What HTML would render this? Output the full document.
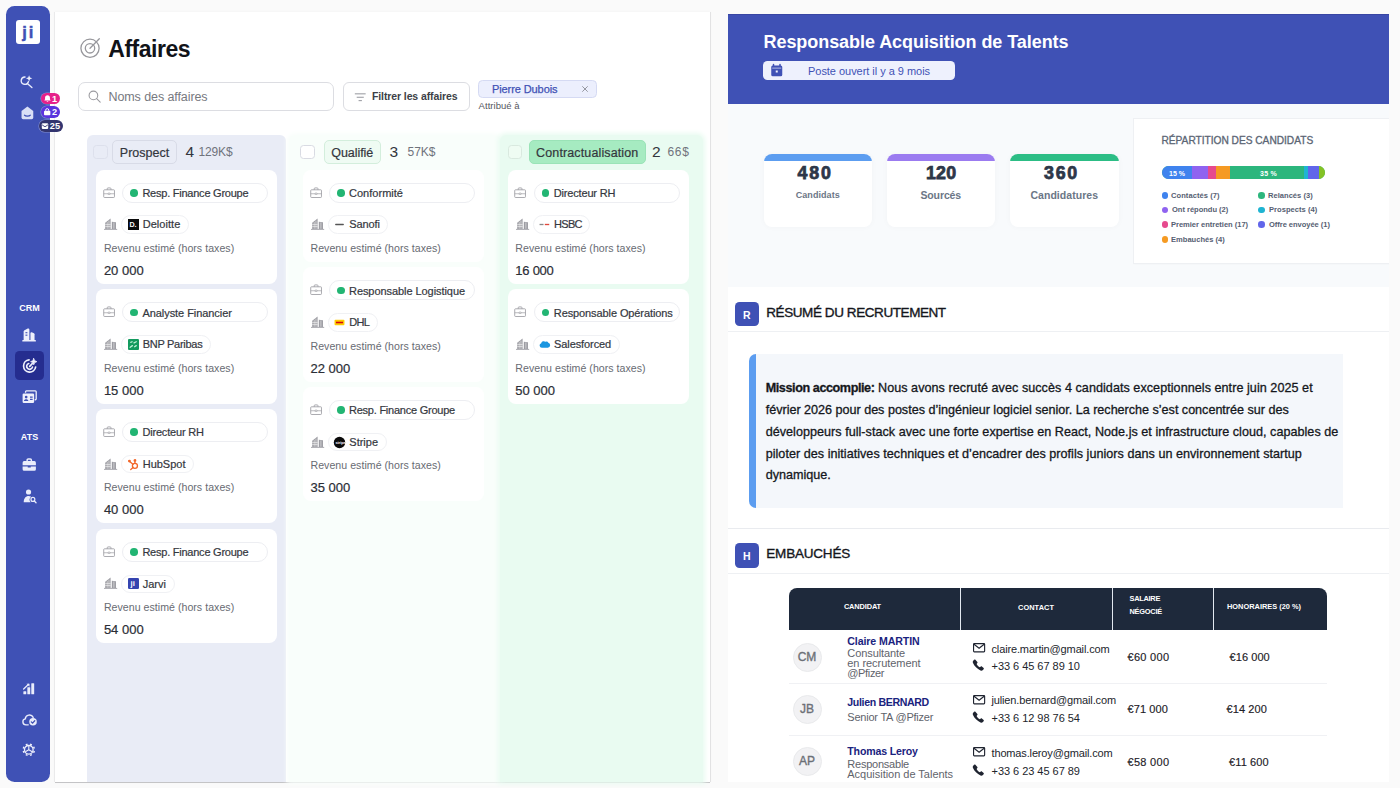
<!DOCTYPE html>
<html lang="fr">
<head>
<meta charset="utf-8">
<title style="letter-spacing:-0.482px;">Affaires</title>
<style>
*{box-sizing:border-box;margin:0;padding:0}
html,body{width:1400px;height:788px;overflow:hidden}
body{background:#fafafa;font-family:"Liberation Sans",sans-serif;color:#1f2430;position:relative}
.abs{position:absolute}
.t{position:absolute;white-space:nowrap;line-height:1;transform:translateY(-50%)}
svg{display:block;overflow:visible}

/* ---------- sidebar ---------- */
#side{z-index:5;position:absolute;left:6px;top:6px;width:44px;height:775.5px;background:#3f51b5;border-radius:8.5px}
#logo{position:absolute;left:10px;top:14px;width:24px;height:24px;background:#fff;border-radius:3px}
.sico{position:absolute;left:15px;width:15px;height:15px}
.slab{position:absolute;left:0;width:47px;text-align:center;color:#fff;font-weight:700;font-size:9px;line-height:1;transform:translateY(-50%)}
#sact{position:absolute;left:9px;top:345.2px;width:29px;height:28.9px;background:#252d8f;border-radius:4.5px}
.bdg{position:absolute;height:11.8px;border-radius:6px;color:#fff;font-weight:700;font-size:9.2px;line-height:13.2px;padding-left:11.3px;white-space:nowrap;box-shadow:0 0 0 .6px rgba(255,255,255,.35)}

/* ---------- left panel ---------- */
#lp{position:absolute;left:55px;top:12px;width:654.5px;height:770px;background:#fff;box-shadow:0 1px 0 0 #c4c4c6,.8px 0 0 0 #dcdcde,-.8px 0 0 0 #e6e6e8,0 0 3px rgba(0,0,0,.04)}
.col{position:absolute;top:122.5px;height:647.5px;border-radius:6px 6px 0 0}
.cb{position:absolute;top:132.5px;width:14.5px;height:14.5px;border:1px solid #d9dbe3;border-radius:3.5px;background:#fff}
.hp{position:absolute;top:128.3px;height:23.4px;padding-top:1.5px;border-radius:5px;border:1px solid;font-size:12.5px;line-height:21.5px;text-align:center;color:#33363d;-webkit-text-stroke:.2px #33363d}
.hn{font-size:15.5px;color:#33363d}
.hm{font-size:12px;color:#70737c}
.card{position:absolute;width:181px;height:114.3px;background:#fff;border-radius:8px}
.card .bf{position:absolute;left:6.5px;top:17px;width:12.2px;height:11.2px}
.card .bd{position:absolute;left:7.8px;top:48.7px;width:13.2px;height:12.9px}
.jp{position:absolute;left:26px;top:12.9px;width:146px;height:20px;border:1px solid #edeef2;border-radius:10px;background:#fff}
.jp i{position:absolute;left:7px;top:5.4px;width:7.6px;height:7.6px;border-radius:50%;background:#22b573}
.jp span{position:absolute;left:19px;top:52%;transform:translateY(-50%);font-size:11px;line-height:1;white-space:nowrap;color:#34373e;-webkit-text-stroke:.2px #34373e}
.cp{position:absolute;left:24.8px;top:45.8px;height:18.6px;border:1px solid #f0f1f4;border-radius:10px;background:#fff;padding:0 7.6px 0 20.5px;font-size:11px;line-height:17.6px;white-space:nowrap;color:#34373e;-webkit-text-stroke:.2px #34373e}
.cp svg,.cp b{position:absolute;left:5.4px;top:2.8px;width:11px;height:11px}
.rl{position:absolute;left:7.5px;top:78.2px;font-size:10.6px;line-height:1;white-space:nowrap;color:#686b73;transform:translateY(-50%)}
.rv{position:absolute;left:7.5px;top:100.3px;font-size:13px;line-height:1;white-space:nowrap;color:#2b2e36;transform:translateY(-50%);-webkit-text-stroke:.2px #2b2e36}

/* ---------- right panel ---------- */
#rp{position:absolute;left:727.5px;top:13.5px;width:661px;height:768.6px;background:#f8fafc;overflow:hidden}
#rh{position:absolute;left:0;top:0;width:661px;height:90px;background:#3f51b5;border-top:1px solid #3846a3}
.stat{position:absolute;top:140px;width:108.5px;height:73px;background:#fff;border-radius:8px;overflow:hidden;box-shadow:0 0 6px rgba(15,23,42,.03)}
.stat u{position:absolute;left:0;top:0;width:100%;height:7.3px}
.stat b{position:absolute;white-space:nowrap;top:20.3px;font-size:17.8px;line-height:1;transform:translateY(-50%);color:#2d3748;-webkit-text-stroke:.75px #2d3748}
.stat s{position:absolute;left:0;width:100%;text-align:center;top:41.5px;text-decoration:none;font-weight:700;line-height:1;transform:translateY(-50%);color:#6b7686}
.lg{position:absolute;font-size:7.55px;font-weight:700;color:#566072;line-height:1;white-space:nowrap;transform:translateY(-50%)}
.ld{position:absolute;width:6.6px;height:6.6px;border-radius:50%}
.sec{position:absolute;left:0;width:661px;background:#fff}
.sb{position:absolute;left:7px;width:24.4px;height:24.4px;border-radius:4.5px;background:#3f51b5;color:#fff;font-weight:700;font-size:10.5px;text-align:center;line-height:26px}
.st{position:absolute;left:38.8px;font-size:13.5px;line-height:1;white-space:nowrap;color:#14161c;transform:translateY(-50%);-webkit-text-stroke:.35px #14161c}
.hr{position:absolute;left:0;width:661px;height:1px;background:#eef0f3}
.th{font-size:7.400px;font-weight:700;color:#fff}
.av{position:absolute;width:29px;height:29px;border-radius:50%;background:#f2f2f4;border:1px solid #e9eaec;color:#6c7077;-webkit-text-stroke:.35px #6c7077;font-size:12px;font-weight:400;text-align:center;line-height:27px}
.nm{font-size:10.600px;font-weight:700;color:#1a237e}
.sub{font-size:11px;color:#5f636b}
.ct{font-size:11px;color:#22252c}
.mo{font-size:11px;color:#1d2026;-webkit-text-stroke:.15px #1d2026}
</style>
</head>
<body>

<!-- ================= SIDEBAR ================= -->
<div id="side">
  <div id="logo"><span class="t" style="left:6.2px;top:11.8px;font-size:16.5px;font-weight:700;color:#3f51b5;letter-spacing:1.9px;-webkit-text-stroke:.45px #3f51b5">ji</span></div>
  <!-- search + sparkle -->
  <svg class="sico" style="top:68.6px;left:14.2px;width:13px;height:13px" viewBox="0 0 24 24" fill="none" stroke="#e9ecfb" stroke-width="2.5" stroke-linecap="round"><path d="M15.5 12.5a6.800 6.800 0 1 1-6.200-8.800"/><path d="M14 16.200l8 7"/><path d="M16.800 0.300l1.700 4.200 4.200 1.700-4.200 1.700-1.700 4.200-1.700-4.200-4.200-1.700 4.200-1.700z" fill="#e9ecfb" stroke="none"/></svg>
  <!-- inbox -->
  <svg class="sico" style="top:100px;left:15.3px;width:12.800px;height:13.500px" viewBox="0 0 24 25"><path d="M12 1L1 9V21.500a3 3 0 0 0 3 3h16a3 3 0 0 0 3-3V9z" fill="#d9dff6"/><path d="M6.500 17c1.800 2.400 9.200 2.400 11 0" fill="none" stroke="#3f51b5" stroke-width="2.300" stroke-linecap="round"/></svg>
  <div class="bdg" style="left:34.7px;top:86.5px;width:19.8px;background:#e6218a"><svg class="abs" style="left:3.2px;top:2.2px;width:7px;height:7.6px" viewBox="0 0 12 13"><path d="M6 0.5c-2.6 0-4.2 1.9-4.2 4.3v2.4L0.5 9.6h11L10.2 7.2V4.8C10.2 2.4 8.6 0.5 6 0.500zM4.300 10.800a1.800 1.800 0 0 0 3.400 0z" fill="#fff"/></svg>1</div>
  <div class="bdg" style="left:34.7px;top:100.4px;width:19.8px;background:#5a35dd"><svg class="abs" style="left:2.2px;top:2px;width:8.4px;height:7.6px" viewBox="0 0 12 12"><path d="M3.600 4.500V3.400a2.400 2.400 0 0 1 4.800 0v1.100" fill="none" stroke="#fff" stroke-width="1.500"/><rect x="1" y="4.500" width="10" height="7" rx="1.300" fill="#fff"/></svg>2</div>
  <div class="bdg" style="left:32.6px;top:114.2px;width:24.7px;background:#33356f;padding-left:11.2px"><svg class="abs" style="left:2.1px;top:2.8px;width:8px;height:6.4px" viewBox="0 0 12 11"><rect x="0.500" y="0.500" width="11" height="10" rx="1.800" fill="#fff"/><path d="M1 3.200l5 3.300 5-3.300" fill="none" stroke="#33356f" stroke-width="1.500"/></svg>25</div>

  <div class="slab" style="top:301.5px">CRM</div>
  <!-- buildings -->
  <svg class="sico" style="top:322.400px;left:16px;width:14.200px;height:13.800px" viewBox="0 0 26 25" fill="#eef0fc"><path d="M3 22V6.500C3 5 4 4 5.500 3.300L10.500 1c1.500-.6 3 .3 3 2v19z"/><path d="M15.500 22V9.500c0-1.300 1-2 2.200-1.700l3.300 1c1.200 .4 2 1.300 2 2.500V22z"/><rect x="0.500" y="22" width="25" height="2.600" rx="1"/><rect x="6.300" y="7.500" width="3.600" height="2" fill="#3f51b5"/><rect x="6.300" y="12" width="3.600" height="2" fill="#3f51b5"/></svg>
  <div id="sact"></div>
  <!-- target (active) -->
  <svg class="sico" style="top:352px;left:15.700px;width:15.400px;height:15.400px" viewBox="0 0 24 24" fill="none" stroke="#eef0fc" stroke-width="2.600" stroke-linecap="round"><path d="M21.300 14a9.500 9.500 0 1 1-10.300-11"/><path d="M16.300 14.200a4.600 4.600 0 1 1-5.800-5.600"/><path d="M12 13l4-4.200"/><path d="M18.300 0.800l1.500 3.400 3.400 1.500-3.400 1.500-1.500 3.400-1.500-3.400-3.400-1.500 3.400-1.500z" fill="#eef0fc" stroke-width="1.200" stroke-linejoin="round"/></svg>
  <!-- contacts card -->
  <svg class="sico" style="top:383.600px;left:15.500px;width:15.400px;height:13.600px" viewBox="0 0 26 23" fill="none" stroke="#eef0fc" stroke-width="2.200" stroke-linejoin="round"><path d="M6 4.500V3a1.500 1.500 0 0 1 1.500-1.500h15A1.500 1.500 0 0 1 24 3v12a1.500 1.500 0 0 1-1.500 1.500h-1"/><rect x="1" y="6" width="19.500" height="16" rx="2" fill="#eef0fc" stroke="none"/><circle cx="7" cy="12" r="2.300" fill="#3f51b5" stroke="none"/><path d="M3.300 18.800c0-4.400 7.400-4.400 7.400 0z" fill="#3f51b5" stroke="none"/><path d="M13.500 12h4.500M13.500 16h4.500" stroke="#3f51b5" stroke-width="2"/></svg>
  <div class="slab" style="top:431px">ATS</div>
  <!-- briefcase -->
  <svg class="sico" style="top:451.500px;left:16px;width:14.500px;height:13.500px" viewBox="0 0 24 22"><path d="M8.500 5V3.300a1.800 1.800 0 0 1 1.800-1.800h3.400a1.800 1.800 0 0 1 1.800 1.800V5" fill="none" stroke="#e9ecfb" stroke-width="2.400"/><path d="M1 7.500A2.500 2.500 0 0 1 3.500 5h17A2.500 2.500 0 0 1 23 7.500V12H1z" fill="#e9ecfb"/><path d="M1 13.800h8.500v1.700h5v-1.700H23V18.500a2.500 2.500 0 0 1-2.500 2.500h-17A2.500 2.500 0 0 1 1 18.500z" fill="#e9ecfb"/></svg>
  <!-- person search -->
  <svg class="sico" style="top:482.500px;left:16.500px;width:13.500px;height:14.500px" viewBox="0 0 22 24"><circle cx="9" cy="5" r="4.300" fill="#e9ecfb"/><path d="M1 22c0-8 5-10.500 8-10.500 1.500 0 3 .4 4.300 1.300a6.500 6.500 0 0 0-.8 9.200z" fill="#e9ecfb"/><circle cx="16.200" cy="17.200" r="3.200" fill="none" stroke="#e9ecfb" stroke-width="2"/><path d="M18.600 19.800l2.800 2.900" stroke="#e9ecfb" stroke-width="2.200" stroke-linecap="round"/></svg>
  <!-- chart -->
  <svg class="sico" style="top:677px;left:15.900px;width:13.300px;height:11.600px" viewBox="0 0 24 22" fill="#e9ecfb"><rect x="17" y="0.500" width="5.500" height="21" rx="1"/><rect x="9.500" y="8" width="5.500" height="13.500" rx="1"/><rect x="2" y="15.500" width="5.500" height="6" rx="1"/><path d="M2.500 11.500L12 2.500" stroke="#e9ecfb" stroke-width="2.400" stroke-linecap="round"/><path d="M8 1.500h5.500V7z"/></svg>
  <!-- cloud check -->
  <svg class="sico" style="top:707px;left:15.500px;width:15.500px;height:13.500px" viewBox="0 0 26 22" fill="none" stroke="#e9ecfb" stroke-width="2.300" stroke-linecap="round"><path d="M10.500 19.500H6.500a5 5 0 0 1-1-9.900 7 7 0 0 1 13.300-2.600"/><circle cx="18.500" cy="14.500" r="6.300" fill="#e9ecfb" stroke="none"/><path d="M15.600 14.600l2.100 2.100 3.700-4" stroke="#3f51b5" stroke-width="2.100"/></svg>
  <!-- gear -->
  <svg class="sico" style="top:737.200px;left:16.300px;width:13.600px;height:13.600px" viewBox="0 0 24 24" fill="none" stroke="#eef0fc"><circle cx="12" cy="12" r="7.600" stroke-width="2.300"/><path d="M19.95 15.29L22.35 16.29M15.29 19.95L16.29 22.35M8.71 19.95L7.71 22.35M4.05 15.29L1.65 16.29M4.05 8.71L1.65 7.71M8.71 4.05L7.71 1.65M15.29 4.05L16.29 1.65M19.95 8.71L22.35 7.71" stroke-width="3.400"/><path d="M12 12V5M12 12l6 3.500M12 12l-6 3.500" stroke-width="1.900"/></svg>
</div>

<!-- ================= LEFT PANEL ================= -->
<div id="lp">
  <svg width="0" height="0" style="position:absolute"><defs>
    <g id="i-bf" fill="none" stroke="#9b9ba1" stroke-width="1.800" stroke-linejoin="round"><rect x="1.500" y="6" width="23" height="16.500" rx="1.600"/><path d="M9 6V3.600A1.600 1.600 0 0 1 10.600 2h4.800A1.600 1.600 0 0 1 17 3.600V6"/><path d="M1.500 14.500h9.500M15 14.500h9.500" stroke-width="1.500"/><path d="M11 13h4v3h-4z" stroke-width="1.300"/></g>
    <g id="i-bd" fill="#9d9da3"><path d="M2.400 21.500V9L13 0.800V21.500zM15.400 21.500V7.300l8.200 .8V21.500z"/><rect x="0" y="21.300" width="26" height="1.700"/><path d="M6.300 8v13M9.800 5v16M2.400 12.600H13M2.400 16.600H13M19.500 8.500V21" stroke="#fff" stroke-width="1"/></g>
  </defs></svg>
  <svg class="abs" style="left:25.200px;top:25.700px;width:20px;height:20px" viewBox="0 0 20 20" fill="none" stroke="#97979c" stroke-width="1.300" stroke-linecap="round"><circle cx="10" cy="10.300" r="9.100"/><circle cx="10" cy="10.300" r="4.700"/><path d="M10 10.300L19.300 0.800"/></svg>
  <div class="t" style="letter-spacing:-0.482px;left:53.300px;top:36.600px;font-size:23px;font-weight:700;color:#111318">Affaires</div>
  <div class="abs" style="left:23px;top:69.500px;width:256px;height:29.800px;border:1px solid #dcdde2;border-radius:7px;background:#fff"></div>
  <svg class="abs" style="left:33px;top:78px;width:13px;height:13px" viewBox="0 0 24 24" fill="none" stroke="#9a9a9f" stroke-width="2" stroke-linecap="round"><circle cx="10" cy="10" r="8"/><path d="M16 16l6.500 6.500"/></svg>
  <div class="t" style="letter-spacing:-0.089px;left:53.500px;top:85.200px;font-size:12.500px;color:#77797f">Noms des affaires</div>
  <div class="abs" style="left:288px;top:70.300px;width:126.500px;height:28.300px;border:1px solid #dcdde2;border-radius:6px;background:#fff"></div>
  <svg class="abs" style="left:299px;top:80.500px;width:12.500px;height:8.500px" viewBox="0 0 13 10" fill="none" stroke="#8d8f96" stroke-width="1.100" stroke-linecap="round"><path d="M.6 1h11.800M2.800 5h7.400M5 9h3"/></svg>
  <div class="t" style="letter-spacing:-0.107px;left:317px;top:84.000px;font-size:10.500px;font-weight:700;color:#3d3f47">Filtrer les affaires</div>
  <div class="abs" style="left:422.500px;top:68px;width:119.500px;height:18.400px;border:1px solid #d5daf3;border-radius:4.500px;background:#eceffd"></div>
  <div class="t" style="letter-spacing:-0.095px;left:437px;top:77.300px;font-size:11px;color:#3f51b5;-webkit-text-stroke:.25px #3f51b5">Pierre Dubois</div>
  <svg class="abs" style="left:527px;top:74.300px;width:6px;height:6px" viewBox="0 0 6 6" stroke="#8b8d96" stroke-width=".9"><path d="M.3.3l5.400 5.400M5.700.3L.3 5.700"/></svg>
  <div class="t" style="letter-spacing:0.033px;left:423.600px;top:94px;font-size:9.500px;color:#55575e">Attribué à</div>
  <div class="col" style="left:32px;width:198.500px;background:#e9ecf6"></div>
  <div class="col" style="left:234px;width:211px;background:#f9fefb;box-shadow:0 0 5px 2px #f9fefb"></div>
  <div class="col" style="left:445px;width:203px;background:#e9fbf1;box-shadow:0 0 5px 1.5px #e9fbf1"></div>
  <div class="cb" style="left:38px;background:#e9ecf6;border-color:#dde0ec"></div>
  <div class="hp" style="letter-spacing:0.007px;left:57px;width:65px;background:#e9ecf6;border-color:#d8dbe7">Prospect</div>
  <div class="t hn" style="left:130.500px;top:140.200px">4</div><div class="t hm" style="letter-spacing:-0.141px;left:143.500px;top:140.200px">129K$</div>
  <div class="cb" style="left:245px"></div>
  <div class="hp" style="letter-spacing:-0.074px;left:268.500px;width:57.500px;background:#effbf3;border-color:#d3eedc">Qualifié</div>
  <div class="t hn" style="left:334.500px;top:140.200px">3</div><div class="t hm" style="letter-spacing:-0.008px;left:352.500px;top:140.200px">57K$</div>
  <div class="cb" style="left:452.500px;background:#effcf3;border-color:#d9e9df"></div>
  <div class="hp" style="letter-spacing:0.124px;left:473.500px;width:117.500px;background:#a6ebc1;border-color:#9ae3b7">Contractualisation</div>
  <div class="t hn" style="left:597px;top:140.200px">2</div><div class="t hm" style="letter-spacing:0.656px;left:612.500px;top:140.200px">66$</div>
  <div class="card" style="left:41.4px;top:157.7px"><svg class="bf" viewBox="0 0 26 24"><use href="#i-bf"/></svg><div class="jp"><i></i><span style="letter-spacing:-0.234px;">Resp. Finance Groupe</span></div><svg class="bd" viewBox="0 0 26 25"><use href="#i-bd"/></svg><div class="cp"><svg viewBox="0 0 10 10"><rect width="10" height="10" fill="#0b0b0b"/><text x="1.300" y="7.600" font-size="6.500" font-weight="700" fill="#fff" font-family="Liberation Sans,sans-serif">D.</text></svg><span style="letter-spacing:0.050px;">Deloitte</span></div><div class="rl" style="letter-spacing:0.030px;">Revenu estimé (hors taxes)</div><div class="rv">20 000</div></div>
  <div class="card" style="left:41.4px;top:277.4px"><svg class="bf" viewBox="0 0 26 24"><use href="#i-bf"/></svg><div class="jp"><i></i><span style="letter-spacing:-0.056px;">Analyste Financier</span></div><svg class="bd" viewBox="0 0 26 25"><use href="#i-bd"/></svg><div class="cp"><svg viewBox="0 0 10 10"><rect width="10" height="10" rx="1" fill="#149b5f"/><path d="M2 7.500l2-1.500M5.500 3.500l2-1M6 7l1.500-1M2.500 3l1.200-.5" stroke="#bff0d6" stroke-width="1.200" stroke-linecap="round"/></svg><span style="letter-spacing:-0.280px;">BNP Paribas</span></div><div class="rl" style="letter-spacing:0.030px;">Revenu estimé (hors taxes)</div><div class="rv">15 000</div></div>
  <div class="card" style="left:41.4px;top:397.1px"><svg class="bf" viewBox="0 0 26 24"><use href="#i-bf"/></svg><div class="jp"><i></i><span style="letter-spacing:-0.173px;">Directeur RH</span></div><svg class="bd" viewBox="0 0 26 25"><use href="#i-bd"/></svg><div class="cp"><svg viewBox="0 0 10 10" fill="none" stroke="#f2672a" stroke-width="1.200" stroke-linecap="round"><circle cx="6.300" cy="6.200" r="2.300"/><path d="M6.300 3.900V1.800M4.500 4.800L1.500 2.200M4.600 7.700L2.500 9.500"/><circle cx="6.300" cy="1.300" r=".7" fill="#f2672a"/><circle cx="1.300" cy="1.900" r=".7" fill="#f2672a"/></svg>HubSpot</div><div class="rl" style="letter-spacing:0.030px;">Revenu estimé (hors taxes)</div><div class="rv">40 000</div></div>
  <div class="card" style="left:41.4px;top:516.8px"><svg class="bf" viewBox="0 0 26 24"><use href="#i-bf"/></svg><div class="jp"><i></i><span style="letter-spacing:-0.234px;">Resp. Finance Groupe</span></div><svg class="bd" viewBox="0 0 26 25"><use href="#i-bd"/></svg><div class="cp"><svg viewBox="0 0 10 10"><rect width="10" height="10" rx="1.200" fill="#3544b0"/><text x="2.300" y="7.700" font-size="7" font-weight="700" fill="#fff" font-family="Liberation Sans,sans-serif">ji</text></svg>Jarvi</div><div class="rl" style="letter-spacing:0.030px;">Revenu estimé (hors taxes)</div><div class="rv">54 000</div></div>
  <div class="card" style="left:248px;top:157.700px;height:92.500px"><svg class="bf" viewBox="0 0 26 24"><use href="#i-bf"/></svg><div class="jp"><i></i><span style="letter-spacing:0.020px;">Conformité</span></div><svg class="bd" viewBox="0 0 26 25"><use href="#i-bd"/></svg><div class="cp"><svg viewBox="0 0 10 10"><rect x="1" y="4.400" width="8" height="1.300" rx=".6" fill="#555"/></svg><span style="letter-spacing:-0.101px;">Sanofi</span></div><div class="rl" style="letter-spacing:0.030px;">Revenu estimé (hors taxes)</div><div class="rv"></div></div>
  <div class="card" style="left:248px;top:255.39999999999998px"><svg class="bf" viewBox="0 0 26 24"><use href="#i-bf"/></svg><div class="jp"><i></i><span style="letter-spacing:-0.065px;">Responsable Logistique</span></div><svg class="bd" viewBox="0 0 26 25"><use href="#i-bd"/></svg><div class="cp"><svg viewBox="0 0 10 10"><rect x=".5" y="2.500" width="9" height="5" rx=".8" fill="#fc0"/><rect x="1.800" y="4.300" width="6.400" height="1.400" fill="#d40511"/></svg><span style="letter-spacing:-0.739px">DHL</span></div><div class="rl" style="letter-spacing:0.030px;">Revenu estimé (hors taxes)</div><div class="rv">22 000</div></div>
  <div class="card" style="left:248px;top:375.1px"><svg class="bf" viewBox="0 0 26 24"><use href="#i-bf"/></svg><div class="jp"><i></i><span style="letter-spacing:-0.234px;">Resp. Finance Groupe</span></div><svg class="bd" viewBox="0 0 26 25"><use href="#i-bd"/></svg><div class="cp"><svg viewBox="0 0 10 10"><circle cx="5" cy="5" r="5.200" fill="#0a0a0a"/><text x="1.300" y="6.200" font-size="3.400" font-weight="700" fill="#fff" font-family="Liberation Sans,sans-serif">stripe</text></svg>Stripe</div><div class="rl" style="letter-spacing:0.030px;">Revenu estimé (hors taxes)</div><div class="rv">35 000</div></div>
  <div class="card" style="left:452.8px;top:157.7px"><svg class="bf" viewBox="0 0 26 24"><use href="#i-bf"/></svg><div class="jp"><i></i><span style="letter-spacing:-0.173px;">Directeur RH</span></div><svg class="bd" viewBox="0 0 26 25"><use href="#i-bd"/></svg><div class="cp"><svg viewBox="0 0 10 10"><rect x=".5" y="4.400" width="3.600" height="1.200" fill="#888"/><rect x="5.300" y="4.400" width="4" height="1.200" fill="#e0483c"/></svg><span style="letter-spacing:-0.716px">HSBC</span></div><div class="rl" style="letter-spacing:0.030px;">Revenu estimé (hors taxes)</div><div class="rv" style="letter-spacing:-0.244px">16 000</div></div>
  <div class="card" style="left:452.8px;top:277.4px"><svg class="bf" viewBox="0 0 26 24"><use href="#i-bf"/></svg><div class="jp"><i></i><span style="letter-spacing:-0.099px;">Responsable Opérations</span></div><svg class="bd" viewBox="0 0 26 25"><use href="#i-bd"/></svg><div class="cp"><svg viewBox="0 0 10 10"><path d="M2.600 8a2.100 2.100 0 0 1-.6-4.100 2.300 2.300 0 0 1 3.800-1.300 2 2 0 0 1 2.700.9A2.300 2.300 0 0 1 8 8z" fill="#1b96e0"/></svg><span style="letter-spacing:-0.099px">Salesforced</span></div><div class="rl" style="letter-spacing:0.030px;">Revenu estimé (hors taxes)</div><div class="rv">50 000</div></div>
</div>

<!-- ================= RIGHT PANEL ================= -->
<div id="rp">
  <div id="rh"></div>
  <div class="t" style="letter-spacing:-0.061px;left:36.0px;top:28.5px;font-size:18px;font-weight:700;color:#fff">Responsable Acquisition de Talents</div>
  <div class="abs" style="left:35.0px;top:47.7px;width:192.600px;height:19.100px;border-radius:4.500px;background:#eef1fd"></div>
  <svg class="abs" style="left:43.0px;top:50.7px;width:11.500px;height:12.500px" viewBox="0 0 23 25"><path d="M5 1v4M18 1v4" stroke="#3f51b5" stroke-width="3" stroke-linecap="round"/><rect x="0.500" y="3" width="22" height="21.500" rx="3" fill="#3f51b5"/><rect x="2.500" y="7.500" width="18" height="1.300" fill="#eef1fd"/><rect x="9.500" y="13" width="4" height="4" fill="#eef1fd"/></svg>
  <div class="t" style="letter-spacing:-0.034px;left:80.5px;top:57.3px;font-size:11px;color:#3f51b5">Poste ouvert il y a 9 mois</div>
  <div class="stat" style="left:36.0px"><u style="background:#5c9df0"></u><b style="letter-spacing:1.876px;left:34px">480</b><s style="letter-spacing:0.054px;font-size:9px">Candidats</s></div>
  <div class="stat" style="left:159.0px"><u style="background:#9b7bf0"></u><b style="letter-spacing:0.243px;left:39.400px">120</b><s style="letter-spacing:-0.105px;font-size:10.5px">Sourcés</s></div>
  <div class="stat" style="left:282.5px"><u style="background:#2cbd85"></u><b style="letter-spacing:1.776px;left:34px">360</b><s style="letter-spacing:0.041px;font-size:10.5px">Candidatures</s></div>
  <div class="abs" style="left:406.0px;top:105.0px;width:260px;height:144px;background:#fff;box-shadow:0 0 0 1px #eef0f3,0 1px 2px rgba(0,0,0,.04)"></div>
  <div class="t" style="letter-spacing:-0.023px;left:434.0px;top:127.2px;font-size:10.200px;color:#5b6574;-webkit-text-stroke:.3px #5b6574">RÉPARTITION DES CANDIDATS</div>
  <div class="abs" style="left:434.0px;top:152.8px;width:163.500px;height:13.200px;border-radius:7px;overflow:hidden;background:#2cb67d">
    <i class="abs" style="left:0;top:0;height:100%;width:30.500px;background:#3f83ee"></i>
    <i class="abs" style="left:30.500px;top:0;height:100%;width:16px;background:#8f63f0"></i>
    <i class="abs" style="left:46.500px;top:0;height:100%;width:7.500px;background:#e64a8e"></i>
    <i class="abs" style="left:54px;top:0;height:100%;width:14.500px;background:#f59a23"></i>
    <i class="abs" style="left:142.500px;top:0;height:100%;width:4px;background:#1fb4d2"></i>
    <i class="abs" style="left:146.500px;top:0;height:100%;width:10.500px;background:#6166ea"></i>
    <i class="abs" style="left:157px;top:0;height:100%;width:7px;background:#84c225"></i>
  </div>
  <div class="t" style="letter-spacing:-0.017px;left:441.5px;top:159.5px;font-size:7px;font-weight:700;color:#fff">15 %</div>
  <div class="t" style="letter-spacing:0.233px;left:532.5px;top:159.5px;font-size:7px;font-weight:700;color:#fff">35 %</div>
  <i class="ld" style="left:434.0px;top:178.7px;background:#3f83ee"></i><div class="lg" style="letter-spacing:0.068px;left:443.5px;top:182.2px">Contactés (7)</div>
  <i class="ld" style="left:434.0px;top:193.3px;background:#8f63f0"></i><div class="lg" style="letter-spacing:-0.027px;left:444.5px;top:196.8px">Ont répondu (2)</div>
  <i class="ld" style="left:434.0px;top:207.9px;background:#e64a8e"></i><div class="lg" style="letter-spacing:-0.023px;left:443.5px;top:211.4px">Premier entretien (17)</div>
  <i class="ld" style="left:434.0px;top:222.5px;background:#f59a23"></i><div class="lg" style="letter-spacing:0.009px;left:443.5px;top:226.0px">Embauchés (4)</div>
  <i class="ld" style="left:530.5px;top:178.7px;background:#2cb67d"></i><div class="lg" style="letter-spacing:0.019px;left:540.5px;top:182.2px">Relancés (3)</div>
  <i class="ld" style="left:530.5px;top:193.3px;background:#1fb4d2"></i><div class="lg" style="letter-spacing:0.029px;left:541.5px;top:196.8px">Prospects (4)</div>
  <i class="ld" style="left:530.5px;top:207.9px;background:#6166ea"></i><div class="lg" style="letter-spacing:-0.044px;left:541.5px;top:211.4px">Offre envoyée (1)</div>
  <div class="sec" style="top:273.8px;height:240.500px"></div>
  <div class="sb" style="top:288.4px">R</div>
  <div class="st" style="letter-spacing:-0.422px;top:299.3px">RÉSUMÉ DU RECRUTEMENT</div>
  <div class="hr" style="top:317.5px"></div>
  <div class="abs" style="left:21.5px;top:340.3px;width:594px;height:154.300px;background:#f4f7fb;border-left:7px solid #5c9df0;border-radius:7px 0 0 7px"></div>
  <div class="t" style="left:38.2px;top:374.3px;font-size:12.600px;color:#15171c;-webkit-text-stroke:.3px #15171c"><b style="letter-spacing:-0.410px;">Mission accomplie:</b> <span style="letter-spacing:0.046px;">Nous avons recruté avec succès 4 candidats exceptionnels entre juin 2025 et</span></div>
  <div class="t" style="letter-spacing:-0.014px;left:38.2px;top:396.2px;font-size:12.600px;color:#15171c;-webkit-text-stroke:.3px #15171c">février 2026 pour des postes d’ingénieur logiciel senior. La recherche s’est concentrée sur des</div>
  <div class="t" style="letter-spacing:0.027px;left:38.2px;top:418.1px;font-size:12.600px;color:#15171c;-webkit-text-stroke:.3px #15171c">développeurs full-stack avec une forte expertise en React, Node.js et infrastructure cloud, capables de</div>
  <div class="t" style="letter-spacing:0.028px;left:38.2px;top:440.0px;font-size:12.600px;color:#15171c;-webkit-text-stroke:.3px #15171c">piloter des initiatives techniques et d’encadrer des profils juniors dans un environnement startup</div>
  <div class="t" style="letter-spacing:-0.011px;left:38.2px;top:461.9px;font-size:12.600px;color:#15171c;-webkit-text-stroke:.3px #15171c">dynamique.</div>
  <div class="hr" style="top:514.5px;background:#e9ebef"></div>
  <div class="sec" style="top:515.5px;height:260px"></div>
  <div class="sb" style="top:529.8px">H</div>
  <div class="st" style="letter-spacing:-0.202px;top:540.8px">EMBAUCHÉS</div>
  <div class="hr" style="top:559.0px"></div>
  <div class="abs" style="left:61.5px;top:574.5px;width:538px;height:42.300px;background:#1e293b;border-radius:8px 8px 0 0"></div>
  <i class="abs" style="left:232.2px;top:574.5px;width:1px;height:42.300px;background:#e2e8f0"></i>
  <i class="abs" style="left:384.7px;top:574.5px;width:1px;height:42.300px;background:#e2e8f0"></i>
  <i class="abs" style="left:485.7px;top:574.5px;width:1px;height:42.300px;background:#e2e8f0"></i>
  <div class="t th" style="letter-spacing:-0.118px;left:116.4px;top:593.0px">CANDIDAT</div>
  <div class="t th" style="letter-spacing:0.060px;left:290.5px;top:594.6px">CONTACT</div>
  <div class="t th" style="letter-spacing:-0.265px;left:402.0px;top:585.2px">SALAIRE</div>
  <div class="t th" style="letter-spacing:-0.228px;left:402.0px;top:598.8px">NÉGOCIÉ</div>
  <div class="t th" style="letter-spacing:0.005px;left:499.5px;top:593.0px">HONORAIRES (20 %)</div>
  <div class="hr" style="left:61.5px;width:538px;top:669.6px;background:#f0f1f4"></div>
  <div class="hr" style="left:61.5px;width:538px;top:721.2px;background:#f0f1f4"></div>
  <div class="av" style="left:65.0px;top:629.5px">CM</div>
  <div class="t nm" style="letter-spacing:-0.098px;left:119.8px;top:627.9px">Claire MARTIN</div>
  <div class="t sub" style="letter-spacing:-0.084px;left:119.8px;top:639.5px">Consultante</div>
  <div class="t sub" style="letter-spacing:-0.049px;left:119.8px;top:649.6px">en recrutement</div>
  <div class="t sub" style="letter-spacing:-0.342px;left:119.8px;top:659.9px">@Pfizer</div>
  <svg class="abs" style="left:245.1px;top:629.9px;width:12.200px;height:9.400px" viewBox="0 0 26 20" fill="none" stroke="#1f2430" stroke-width="2.400"><rect x="1.200" y="1.200" width="23.600" height="17.600" rx="1.500"/><path d="M1.500 2l11.500 9 11.500-9"/></svg>
  <div class="t ct" style="letter-spacing:-0.139px;left:264.0px;top:635.2px">claire.martin@gmail.com</div>
  <svg class="abs" style="left:245.5px;top:646.7px;width:12.400px;height:12.400px;margin:-.9px 0 0 -.9px" viewBox="0 0 24 24"><path d="M6.600 1.500c-.6-.7-1.700-.7-2.400 0L2.300 3.400c-1 1-1.200 2.600-.6 4 2.800 6.500 8.400 12.100 14.900 14.900 1.400.6 3 .4 4-.6l1.900-1.900c.7-.7.7-1.800 0-2.400l-3.400-2.900c-.6-.5-1.500-.5-2.100 0l-1.700 1.500c-2.700-1.400-5-3.700-6.400-6.400l1.500-1.700c.5-.6.5-1.500 0-2.100z" fill="#1f2430"/></svg>
  <div class="t ct" style="letter-spacing:-0.035px;left:264.0px;top:652.2px">+33 6 45 67 89 10</div>
  <div class="t mo" style="letter-spacing:0.291px;left:400.0px;top:643.3px">€60 000</div>
  <div class="t mo" style="letter-spacing:0.076px;left:502.0px;top:643.3px">€16 000</div>
  <div class="av" style="left:65.0px;top:681.0px">JB</div>
  <div class="t nm" style="letter-spacing:-0.352px;left:119.8px;top:688.5px">Julien BERNARD</div>
  <div class="t sub" style="letter-spacing:-0.220px;left:119.8px;top:703.2px">Senior TA @Pfizer</div>
  <svg class="abs" style="left:245.1px;top:681.4px;width:12.200px;height:9.400px" viewBox="0 0 26 20" fill="none" stroke="#1f2430" stroke-width="2.400"><rect x="1.200" y="1.200" width="23.600" height="17.600" rx="1.500"/><path d="M1.500 2l11.500 9 11.500-9"/></svg>
  <div class="t ct" style="letter-spacing:-0.148px;left:264.0px;top:686.7px">julien.bernard@gmail.com</div>
  <svg class="abs" style="left:245.5px;top:698.7px;width:12.400px;height:12.400px;margin:-.9px 0 0 -.9px" viewBox="0 0 24 24"><path d="M6.600 1.500c-.6-.7-1.700-.7-2.400 0L2.300 3.400c-1 1-1.200 2.600-.6 4 2.800 6.500 8.400 12.100 14.900 14.900 1.400.6 3 .4 4-.6l1.900-1.900c.7-.7.7-1.800 0-2.400l-3.400-2.900c-.6-.5-1.500-.5-2.100 0l-1.700 1.500c-2.700-1.400-5-3.700-6.400-6.400l1.500-1.700c.5-.6.5-1.500 0-2.100z" fill="#1f2430"/></svg>
  <div class="t ct" style="letter-spacing:-0.035px;left:264.0px;top:704.2px">+33 6 12 98 76 54</div>
  <div class="t mo" style="letter-spacing:0.105px;left:400.0px;top:695.5px">€71 000</div>
  <div class="t mo" style="letter-spacing:0.076px;left:499.1px;top:695.5px">€14 200</div>
  <div class="av" style="left:65.0px;top:733.4px">AP</div>
  <div class="t nm" style="letter-spacing:-0.168px;left:119.8px;top:737.7px">Thomas Leroy</div>
  <div class="t sub" style="letter-spacing:-0.229px;left:119.8px;top:750.3px">Responsable</div>
  <div class="t sub" style="letter-spacing:-0.018px;left:119.8px;top:760.0px">Acquisition de Talents</div>
  <svg class="abs" style="left:245.1px;top:733.9px;width:12.200px;height:9.400px" viewBox="0 0 26 20" fill="none" stroke="#1f2430" stroke-width="2.400"><rect x="1.200" y="1.200" width="23.600" height="17.600" rx="1.500"/><path d="M1.500 2l11.500 9 11.500-9"/></svg>
  <div class="t ct" style="letter-spacing:-0.148px;left:264.0px;top:739.2px">thomas.leroy@gmail.com</div>
  <svg class="abs" style="left:245.5px;top:751.6px;width:12.400px;height:12.400px;margin:-.9px 0 0 -.9px" viewBox="0 0 24 24"><path d="M6.600 1.500c-.6-.7-1.700-.7-2.400 0L2.300 3.400c-1 1-1.200 2.600-.6 4 2.800 6.500 8.400 12.100 14.900 14.900 1.400.6 3 .4 4-.6l1.900-1.900c.7-.7.7-1.800 0-2.400l-3.400-2.900c-.6-.5-1.500-.5-2.100 0l-1.700 1.500c-2.700-1.400-5-3.700-6.400-6.400l1.500-1.700c.5-.6.5-1.500 0-2.100z" fill="#1f2430"/></svg>
  <div class="t ct" style="letter-spacing:-0.035px;left:264.0px;top:757.1px">+33 6 23 45 67 89</div>
  <div class="t mo" style="letter-spacing:0.291px;left:400.0px;top:748.5px">€58 000</div>
  <div class="t mo" style="letter-spacing:0.121px;left:501.5px;top:748.5px">€11 600</div>
</div>

</body>
</html>
